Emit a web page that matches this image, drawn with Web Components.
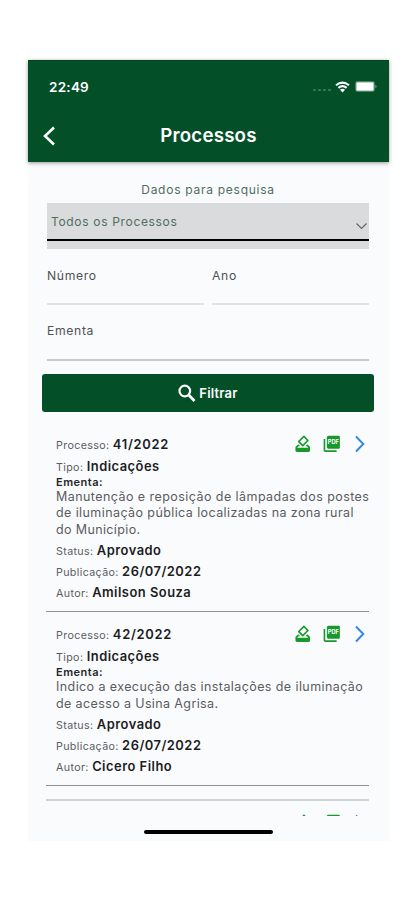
<!DOCTYPE html>
<html lang="pt-BR">
<head>
<meta charset="utf-8">
<title>Processos</title>
<style>
html,body{margin:0;background:#fff}
body{width:415px;height:900px;overflow:hidden;font-family:Inter,"Liberation Sans",sans-serif;box-sizing:border-box;padding:60px 0 0 28px}
</style>
</head>
<body>
<phone-screen>
  <app-header slot="header" time="22:49">Processos</app-header>
  <search-form></search-form>
  <process-item style="--top:19px" numero="41/2022" tipo="Indicações" status="Aprovado" data="26/07/2022" autor="Amilson Souza"><text-line style="--ls:.44px">Manutenção e reposição de lâmpadas dos postes</text-line><text-line style="--ls:.41px">de iluminação pública localizadas na zona rural</text-line><text-line style="--ls:.37px">do Município.</text-line></process-item>
  <process-item numero="42/2022" tipo="Indicações" status="Aprovado" data="26/07/2022" autor="Cicero Filho"><text-line style="--ls:.41px">Indico a execução das instalações de iluminação</text-line><text-line style="--ls:.38px">de acesso a Usina Agrisa.</text-line></process-item>
  <next-item></next-item>
</phone-screen>
<script>
const define = (name, render) => customElements.define(name, class extends HTMLElement {
  connectedCallback() {
    if (this.shadowRoot) return;
    this.attachShadow({ mode: 'open' }).innerHTML = render(this);
  }
});

define('text-line', () => `<style>:host{display:block;white-space:nowrap;letter-spacing:var(--ls,0)}</style><slot></slot>`);

define('phone-screen', () => `<style>
:host{display:flex;flex-direction:column;width:361px;height:781px;background:#fafbfd}
main{height:654px;overflow:hidden}
footer{flex:1;display:flex;justify-content:center;align-items:flex-start;padding-top:14px;box-sizing:border-box}
i{width:129px;height:4px;border-radius:2px;background:#000}
::slotted([slot=header]){position:relative;z-index:1}
</style><slot name="header"></slot><main><slot></slot></main><footer><i></i></footer>`);

define('app-header', el => `<style>
:host{display:block;height:102px;background:#034f27;color:#fff;box-shadow:0 1px 4px #0006;box-sizing:border-box;border-top:1px solid #02431f}
.status{display:flex;align-items:center;height:51px;padding:0 12px 0 21px}
b{font-size:13.5px;font-weight:600;letter-spacing:.25px;flex:1}
.dots{display:flex;gap:2px;margin:7px 4px 0 0}
.dots i{width:3px;height:2px;border-radius:1px;background:#3f7a5a}
.wifi{margin-right:5px}
svg{display:block}
.bar{display:grid;grid-template-columns:40px 1fr 40px;height:48px;align-items:center}
.bar svg{margin-left:14px}
h1{margin:0;text-align:center;font-size:18.7px;line-height:24px;font-weight:600;letter-spacing:.2px}
</style><div class="status"><b>${el.getAttribute('time')}</b><span class="dots"><i></i><i></i><i></i><i></i></span>
<svg class="wifi" width="15" height="12" viewBox="0 0 15 12" fill="none" stroke="#fff" stroke-width="2.1"><path d="M1 4.3Q7.500-.9 14 4.300M3.400 6.900Q7.500 3.500 11.600 6.900"/><path d="M7.500 11.500 5 8.700Q7.500 6.900 10 8.700Z" fill="#fff" stroke="none"/></svg>
<svg width="22" height="11" viewBox="0 0 22 11"><rect x=".5" y=".5" width="19" height="10" rx="1.800" fill="none" stroke="#4f8467"/><rect x="1.300" y="1.300" width="17.400" height="8.400" rx=".6" fill="#fff"/><path d="M20.700 4v3q1.300-1.500 0-3" fill="#6f9d82" stroke="#6f9d82" stroke-width=".5"/></svg></div>
<div class="bar"><svg width="14" height="20" viewBox="0 0 14 20" fill="none" stroke="#fff" stroke-width="2.600"><path d="M12 1.500 3 10l9 8.500"/></svg><h1><slot></slot></h1></div>`);

define('search-form', () => `<style>
:host{display:block;height:251px;padding:19px 15px 0 14px;box-sizing:border-box}
h2{margin:0;height:22px;line-height:18px;text-align:center;font-size:12px;font-weight:400;letter-spacing:.73px;color:#4f6e5d}
.select{height:46px;margin:0 5px;background:#dadbdd;box-sizing:border-box;display:flex;flex-direction:column}
.value{height:36px;display:flex;justify-content:space-between;padding:0 1px 0 4px;line-height:37px;font-size:12px;letter-spacing:.67px;color:#4f6e5d}
.value svg{margin-top:19px}
.rule{height:2px;background:#000}
.row{display:flex;gap:8px;margin:0 5px}
.row label:first-child{width:157px}.row label:last-child{flex:1}
label{display:block;height:56px;box-sizing:border-box;border-bottom:2px solid #e0e2e4;font-size:12.200px;line-height:18px;padding-top:18px;letter-spacing:.65px;color:#505255}
.full{margin:0 5px;height:56px;padding-top:17px;border-bottom:2px solid #c8cbcc}
button{display:flex;width:332px;height:38px;margin:13px 0 0;padding:0;border:0;border-radius:3px;background:#034f27;color:#fff;align-items:center;justify-content:center;gap:3px;font:600 13px/18px Inter,sans-serif}
span{letter-spacing:.2px}
</style><h2>Dados para pesquisa</h2>
<div class="select"><div class="value">Todos os Processos<svg width="13" height="9" viewBox="0 0 13 9" fill="none" stroke="#65676a" stroke-width="1.200"><path d="m1.500 1.500 5 5 5-5"/></svg></div><div class="rule"></div></div>
<div class="row"><label>Número</label><label>Ano</label></div><label class="full">Ementa</label>
<button><svg width="18" height="19" viewBox="0 0 18 19" fill="none" stroke="#fff"><circle cx="6.800" cy="7" r="5.300" stroke-width="2.200"/><path d="m10.800 11 5.700 6" stroke-width="2.700"/></svg><span>Filtrar</span></button>`);

define('action-icons', () => `<style>:host{display:flex;align-items:center}svg{display:block}svg+svg{margin-left:9.500px}svg.go{margin-left:14px}</style>
<svg width="19.500" height="19.500" viewBox="0 0 24 24" fill="#17992b"><path d="M18 13h-.68l-2 2h1.910L19 17H5l1.780-2h2.050l-2-2H6l-3 3v4c0 1.100.890 2 1.990 2H19c1.100 0 2-.890 2-2v-4l-3-3zm-6.660 2.020c.390.390 1.020.390 1.410 0l6.360-6.360c.390-.390.390-1.020 0-1.410L14.160 2.300c-.380-.400-1.010-.400-1.400-.010L6.390 8.660c-.390.390-.390 1.020 0 1.410l4.950 4.950zm2.120-10.610L17 7.950l-4.950 4.950-3.540-3.540 4.950-4.950z"/></svg>
<svg width="19.500" height="19.500" viewBox="0 0 24 24" fill="#17992b"><path d="M20.500 2H8a2 2 0 0 0-2 2v12c0 1.100.9 2 2 2h12.500a1.500 1.500 0 0 0 1.500-1.500v-13A1.500 1.500 0 0 0 20.500 2zM4 6H2v14c0 1.100.9 2 2 2h14v-2H4z"/><text x="14" y="12.500" text-anchor="middle" font-family="Inter,sans-serif" font-size="7" font-weight="700" fill="#fff">PDF</text></svg>
<svg class="go" width="10" height="18" viewBox="0 0 10 18" fill="none" stroke="#3385e2" stroke-width="1.900"><path d="m1 1.500 7.300 7.500L1 16.500"/></svg>`);

define('process-item', el => {
  const a = n => el.getAttribute(n);
  return `<style>
:host{display:block;margin:0 20px 0 18px;padding:var(--top,10px) 0 8px 10px;border-bottom:1px solid #8b9390;color:#5a5c5f}
.top{display:flex;justify-content:space-between;height:24px;align-items:center}
.f{font-size:10.700px;letter-spacing:.36px;height:21px;line-height:21px;white-space:nowrap}
.f b{font-size:12.900px;font-weight:600;letter-spacing:.5px;color:#1c1d1f}
.top b{letter-spacing:.75px}
action-icons{margin-right:4px}
h3{margin:0;height:12px;line-height:10px;font-size:11px;font-weight:600;letter-spacing:.5px;color:#242628}
.body{font-size:12.500px;line-height:16.400px;margin-bottom:2px}
</style><div class="top"><div class="f">Processo: <b>${a('numero')}</b></div><action-icons></action-icons></div>
<div class="f">Tipo: <b>${a('tipo')}</b></div><h3>Ementa:</h3><div class="body"><slot></slot></div>
<div class="f">Status: <b>${a('status')}</b></div><div class="f">Publicação: <b>${a('data')}</b></div><div class="f">Autor: <b>${a('autor')}</b></div>`;
});

define('next-item', () => `<style>:host{display:block;margin:13px 20px 0 18px;border-top:2px solid #d0d3d3;padding-top:12px}action-icons{justify-content:flex-end;margin-right:4px}</style><action-icons></action-icons>`);
</script>
</body>
</html>
